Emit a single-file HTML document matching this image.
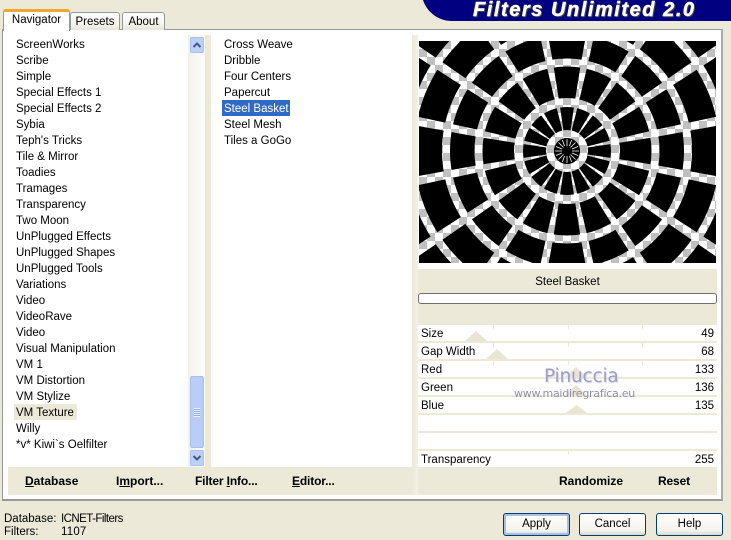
<!DOCTYPE html>
<html><head><meta charset="utf-8"><style>
*{box-sizing:border-box}
html,body{margin:0;padding:0}
body{width:731px;height:538px;overflow:hidden;background:#ece9d8;position:relative;font:11.5px "Liberation Sans",sans-serif;color:#000}
.a{position:absolute}
.t{position:absolute;white-space:nowrap;line-height:16px;height:16px;margin-top:1px}
.b{position:absolute;white-space:nowrap;font-weight:bold;font-size:12px;line-height:16px;top:473px}
.tab{position:absolute;background:linear-gradient(#fff,#f4f3ec 70%,#e6e4d6);border:1px solid #919b9c;border-bottom:none;border-radius:3px 3px 0 0;text-align:center;line-height:18px}
.row{position:absolute;left:418px;width:299px;height:16px;background:#fff}
.btn{position:absolute;top:513px;height:23px;border:1px solid #003c74;border-radius:3px;background:linear-gradient(#fff,#f3f2ec 80%,#dcd8ca);text-align:center;line-height:21px;font-size:11.5px}
.tick{position:absolute;width:1px;height:4px;background:#ece9d8}
.h{position:absolute;font:italic bold 20px/20px 'Liberation Sans',sans-serif;letter-spacing:1.55px;white-space:nowrap;-webkit-text-stroke:.5px currentColor}
</style></head><body>
<svg class="a" style="left:420px;top:0" width="311" height="22"><path d="M3 0H311V21H32C18 21 7 12 3 0Z" fill="#000080"/></svg>
<div class="h" style="left:474px;top:1px;color:#444">Filters Unlimited 2.0</div>
<div class="h" style="left:473px;top:0;color:#fff">Filters Unlimited 2.0</div>

<div class="a" style="left:2px;top:29px;width:721px;height:472px;background:#fff;border:1px solid #919b9c;border-bottom:2px solid #9a9a94;border-right:2px solid #aaa"></div>
<div class="tab" style="left:70px;top:12px;width:50px;height:18px;">Presets</div>
<div class="tab" style="left:122px;top:12px;width:43px;height:18px;">About</div>
<div class="a" style="left:3px;top:9px;width:67px;height:22px;background:#fff;border:1px solid #919b9c;border-bottom:none;border-radius:3px 3px 0 0;text-align:center;line-height:20px"><div class="a" style="left:-1px;top:-1px;width:67px;height:3px;background:#f0a72e;border-radius:3px 3px 0 0"></div>Navigator</div>

<!-- scrollbar -->
<div class="a" style="left:188px;top:35px;width:17px;height:432px;background:linear-gradient(90deg,#f2f1e9,#fefefb)"></div>
<div class="a" style="left:205px;top:35px;width:6px;height:432px;background:#ece9d8"></div>
<div class="a" style="left:190px;top:37px;width:14px;height:16px;background:#bcd0f8;border:1px solid #a9c0ee;border-radius:2px"></div>
<svg class="a" style="left:190px;top:37px" width="14" height="16"><path d="M3.500 10L7 6.500L10.500 10" fill="none" stroke="#41588c" stroke-width="2"/></svg>
<div class="a" style="left:190px;top:376px;width:14px;height:72px;background:#b9cdf9;border:1px solid #a9c0ee;border-radius:2px"></div>
<div class="a" style="left:194px;top:408px;width:6px;height:9px;background:repeating-linear-gradient(#eef3ff 0 1px,#8fa9e0 1px 2px)"></div>
<div class="a" style="left:190px;top:450px;width:14px;height:16px;background:#bcd0f8;border:1px solid #a9c0ee;border-radius:2px"></div>
<svg class="a" style="left:190px;top:450px" width="14" height="16"><path d="M3.500 6L7 9.500L10.500 6" fill="none" stroke="#41588c" stroke-width="2"/></svg>

<!-- left list -->
<div class="a" style="left:14px;top:404px;width:63px;height:16px;background:#ece9d8"></div>
<div class="t" style="left:16px;top:36px">ScreenWorks</div>
<div class="t" style="left:16px;top:52px">Scribe</div>
<div class="t" style="left:16px;top:68px">Simple</div>
<div class="t" style="left:16px;top:84px">Special Effects 1</div>
<div class="t" style="left:16px;top:100px">Special Effects 2</div>
<div class="t" style="left:16px;top:116px">Sybia</div>
<div class="t" style="left:16px;top:132px">Teph's Tricks</div>
<div class="t" style="left:16px;top:148px">Tile &amp; Mirror</div>
<div class="t" style="left:16px;top:164px">Toadies</div>
<div class="t" style="left:16px;top:180px">Tramages</div>
<div class="t" style="left:16px;top:196px">Transparency</div>
<div class="t" style="left:16px;top:212px">Two Moon</div>
<div class="t" style="left:16px;top:228px">UnPlugged Effects</div>
<div class="t" style="left:16px;top:244px">UnPlugged Shapes</div>
<div class="t" style="left:16px;top:260px">UnPlugged Tools</div>
<div class="t" style="left:16px;top:276px">Variations</div>
<div class="t" style="left:16px;top:292px">Video</div>
<div class="t" style="left:16px;top:308px">VideoRave</div>
<div class="t" style="left:16px;top:324px">Video</div>
<div class="t" style="left:16px;top:340px">Visual Manipulation</div>
<div class="t" style="left:16px;top:356px">VM 1</div>
<div class="t" style="left:16px;top:372px">VM Distortion</div>
<div class="t" style="left:16px;top:388px">VM Stylize</div>
<div class="t" style="left:16px;top:404px">VM Texture</div>
<div class="t" style="left:16px;top:420px">Willy</div>
<div class="t" style="left:16px;top:436px">*v* Kiwi`s Oelfilter</div>

<!-- middle list -->
<div class="a" style="left:222px;top:100px;width:68px;height:16px;background:#316ac5"></div>
<div class="t" style="left:224px;top:36px">Cross Weave</div>
<div class="t" style="left:224px;top:52px">Dribble</div>
<div class="t" style="left:224px;top:68px">Four Centers</div>
<div class="t" style="left:224px;top:84px">Papercut</div>
<div class="t" style="left:224px;top:100px;color:#fff">Steel Basket</div>
<div class="t" style="left:224px;top:116px">Steel Mesh</div>
<div class="t" style="left:224px;top:132px">Tiles a GoGo</div>

<div class="a" style="left:412px;top:35px;width:6px;height:460px;background:linear-gradient(90deg,#ece9d8,#f3f1e6)"></div>

<!-- preview -->
<svg class="a" style="left:419px;top:41px" width="297" height="222" viewBox="419 41 297 222">
<defs>
<pattern id="ck" patternUnits="userSpaceOnUse" x="419" y="49" width="16" height="16">
<rect x="0" y="0" width="16" height="16" fill="#fff"/>
<rect x="0" y="0" width="8" height="8" fill="#c0c0c0"/>
<rect x="8" y="8" width="8" height="8" fill="#c0c0c0"/>
</pattern>
<mask id="m" maskUnits="userSpaceOnUse" x="419" y="41" width="297" height="222">
<rect x="419" y="41" width="297" height="222" fill="#fff"/>
<g fill="none" stroke="#000">
<circle cx="567" cy="151" r="17" stroke-width="8"/>
<circle cx="567" cy="151" r="48.500" stroke-width="9"/>
<circle cx="567" cy="151" r="88.500" stroke-width="8"/>
<circle cx="567" cy="151" r="121" stroke-width="8"/>
<circle cx="567" cy="151" r="157" stroke-width="8"/>
</g>
<g fill="#000">
<path transform="rotate(11.25 567 151)" d="M566.500 131H567.500L569 101L570.500 61L571.500 1L572 -40H562L562.500 1L563.500 61L565 101Z"/>
<path transform="rotate(33.75 567 151)" d="M566.500 131H567.500L569 101L570.500 61L571.500 1L572 -40H562L562.500 1L563.500 61L565 101Z"/>
<path transform="rotate(56.25 567 151)" d="M566.500 131H567.500L569 101L570.500 61L571.500 1L572 -40H562L562.500 1L563.500 61L565 101Z"/>
<path transform="rotate(78.75 567 151)" d="M566.500 131H567.500L569 101L570.500 61L571.500 1L572 -40H562L562.500 1L563.500 61L565 101Z"/>
<path transform="rotate(101.25 567 151)" d="M566.500 131H567.500L569 101L570.500 61L571.500 1L572 -40H562L562.500 1L563.500 61L565 101Z"/>
<path transform="rotate(123.75 567 151)" d="M566.500 131H567.500L569 101L570.500 61L571.500 1L572 -40H562L562.500 1L563.500 61L565 101Z"/>
<path transform="rotate(146.25 567 151)" d="M566.500 131H567.500L569 101L570.500 61L571.500 1L572 -40H562L562.500 1L563.500 61L565 101Z"/>
<path transform="rotate(168.75 567 151)" d="M566.500 131H567.500L569 101L570.500 61L571.500 1L572 -40H562L562.500 1L563.500 61L565 101Z"/>
<path transform="rotate(191.25 567 151)" d="M566.500 131H567.500L569 101L570.500 61L571.500 1L572 -40H562L562.500 1L563.500 61L565 101Z"/>
<path transform="rotate(213.75 567 151)" d="M566.500 131H567.500L569 101L570.500 61L571.500 1L572 -40H562L562.500 1L563.500 61L565 101Z"/>
<path transform="rotate(236.25 567 151)" d="M566.500 131H567.500L569 101L570.500 61L571.500 1L572 -40H562L562.500 1L563.500 61L565 101Z"/>
<path transform="rotate(258.75 567 151)" d="M566.500 131H567.500L569 101L570.500 61L571.500 1L572 -40H562L562.500 1L563.500 61L565 101Z"/>
<path transform="rotate(281.25 567 151)" d="M566.500 131H567.500L569 101L570.500 61L571.500 1L572 -40H562L562.500 1L563.500 61L565 101Z"/>
<path transform="rotate(303.75 567 151)" d="M566.500 131H567.500L569 101L570.500 61L571.500 1L572 -40H562L562.500 1L563.500 61L565 101Z"/>
<path transform="rotate(326.25 567 151)" d="M566.500 131H567.500L569 101L570.500 61L571.500 1L572 -40H562L562.500 1L563.500 61L565 101Z"/>
<path transform="rotate(348.75 567 151)" d="M566.500 131H567.500L569 101L570.500 61L571.500 1L572 -40H562L562.500 1L563.500 61L565 101Z"/>
</g>
</mask>
</defs>
<rect x="419" y="41" width="297" height="222" fill="url(#ck)"/>
<rect x="419" y="41" width="297" height="222" fill="#000" mask="url(#m)"/>
<circle cx="567" cy="151" r="13" fill="#000"/>
<g stroke="#fff" stroke-width=".8">
<path d="M567 139V146M567 156V163M555 151H562M572 151H579M558.500 142.500L563.500 147.500M570.500 154.500L575.500 159.500M575.500 142.500L570.500 147.500M563.500 154.500L558.500 159.500M562.400 140L564.500 146M569.500 156L571.600 162M571.600 140L569.500 146M564.500 156L562.400 162M556 146.500L562 149M572 153L578 155.500M578 146.500L572 149M562 153L556 155.500"/>
</g>
</svg>
<div class="a" style="left:418px;top:35px;width:299px;height:6px;background:#fff"></div>

<!-- right controls -->
<div class="a" style="left:418px;top:269px;width:299px;height:226px;background:#ece9d8"></div>
<div class="t" style="left:418px;width:299px;top:273px;text-align:center">Steel Basket</div>
<div class="a" style="left:418px;top:293px;width:299px;height:11px;background:#fff;border:1px solid #6f6f6f;border-radius:3px"></div>

<div class="row" style="top:325px"></div>
<div class="row" style="top:343px"></div>
<div class="row" style="top:361px"></div>
<div class="row" style="top:379px"></div>
<div class="row" style="top:397px"></div>
<div class="row" style="top:415px"></div>
<div class="row" style="top:433px"></div>
<div class="row" style="top:451px"></div>
<div class="tick" style="left:493px;top:325px"></div><div class="tick" style="left:568px;top:325px"></div><div class="tick" style="left:642px;top:325px"></div>
<div class="tick" style="left:493px;top:343px"></div><div class="tick" style="left:568px;top:343px"></div><div class="tick" style="left:642px;top:343px"></div>
<div class="tick" style="left:493px;top:361px"></div><div class="tick" style="left:568px;top:361px"></div><div class="tick" style="left:642px;top:361px"></div>
<div class="tick" style="left:568px;top:451px"></div>
<svg class="a" style="left:418px;top:325px" width="299" height="142">
<path d="M47 16L58 6L69 16ZM68 34L79 24L90 34ZM147 52L158 42L169 52ZM147 70L158 60L169 70ZM148 88L158.500 80L169 88Z" fill="#e9e5d3"/>
</svg>
<div class="t" style="left:421px;top:325px">Size</div><div class="t" style="right:17px;top:325px">49</div>
<div class="t" style="left:421px;top:343px">Gap Width</div><div class="t" style="right:17px;top:343px">68</div>
<div class="t" style="left:421px;top:361px">Red</div><div class="t" style="right:17px;top:361px">133</div>
<div class="t" style="left:421px;top:379px">Green</div><div class="t" style="right:17px;top:379px">136</div>
<div class="t" style="left:421px;top:397px">Blue</div><div class="t" style="right:17px;top:397px">135</div>
<div class="t" style="left:421px;top:451px">Transparency</div><div class="t" style="right:17px;top:451px">255</div>

<div class="a" style="left:544px;top:366px;font:18.500px/22px 'DejaVu Sans',sans-serif;color:#9d9fc4;white-space:nowrap;letter-spacing:-.2px;text-shadow:1px 1px 1px #d8d8e4">Pinuccia</div>
<div class="a" style="left:514px;top:387px;font:11px/14px 'DejaVu Sans',sans-serif;color:#8f90a8;white-space:nowrap;letter-spacing:-.25px">www.maidiregrafica.eu</div>

<!-- bottom bar -->
<div class="a" style="left:8px;top:467px;width:404px;height:28px;background:#ece9d8"></div>
<div class="b" style="left:25px"><u>D</u>atabase</div>
<div class="b" style="left:116px">I<u>m</u>port...</div>
<div class="b" style="left:195px;letter-spacing:-.15px">Filter <u>I</u>nfo...</div>
<div class="b" style="left:292px;letter-spacing:-.15px"><u>E</u>ditor...</div>
<div class="b" style="left:559px">Randomize</div>
<div class="b" style="left:658px;letter-spacing:-.15px">Reset</div>

<!-- status -->
<div class="t" style="left:4px;top:510px">Database:</div><div class="t" style="left:61px;top:510px;letter-spacing:-.55px">ICNET-Filters</div>
<div class="t" style="left:4px;top:523px">Filters:</div><div class="t" style="left:61px;top:523px;letter-spacing:.2px">1107</div>

<div class="btn" style="left:503px;width:67px;box-shadow:inset 0 0 0 2px #a6c0ea">Apply</div>
<div class="btn" style="left:579px;width:67px">Cancel</div>
<div class="btn" style="left:656px;width:67px">Help</div>
</body></html>
